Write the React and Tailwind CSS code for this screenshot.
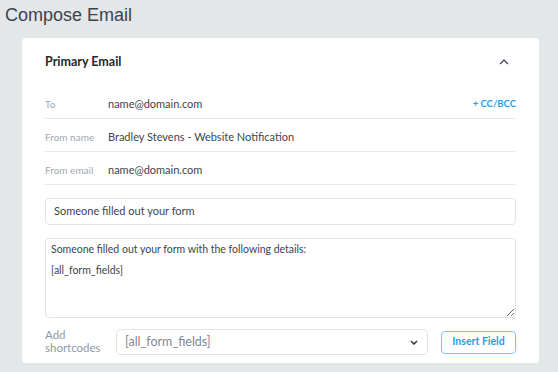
import React from 'react';

function Row({ label, value, extra }) {
  return (
    <div className="flex items-center h-[33px] pt-[5px] border-b border-[#e6e8ea]">
      <span className="w-[63px] text-[10px] text-[#a0a7b0]">{label}</span>
      <span className="flex-1 text-[11px] text-[#3d4450]">{value}</span>
      {extra}
    </div>
  );
}

export default function App() {
  return (
    <div className="w-[558px] h-[372px] bg-[#e4e7e8] overflow-hidden font-['Lato',sans-serif]">
      {/* Page title */}
      <h1 className="pl-[5px] pt-[3px] h-[38px] text-[18px] leading-[24px] text-[#3b4350] font-['Liberation_Sans',sans-serif]">Compose Email</h1>

      {/* Card */}
      <div className="ml-[22px] w-[517px] h-[325px] bg-white rounded-[4px] px-[23px] pt-[15px]">
        <div className="flex items-center justify-between h-[18px]">
          <span className="text-[12.5px] font-bold text-[#23282d]">Primary Email</span>
          <svg width="10" height="6" viewBox="0 0 10 6" className="mr-[7px]">
            <path d="M1 5 L5 1 L9 5" fill="none" stroke="#4b5260" strokeWidth="1.4" />
          </svg>
        </div>

        <div className="mt-[15px]">
          <Row
            label="To"
            value="name@domain.com"
            extra={<span className="text-[9.5px] font-bold text-[#1ea1e6]">+ CC/BCC</span>}
          />
          <Row label="From name" value="Bradley Stevens - Website Notification" />
          <Row label="From email" value="name@domain.com" />
        </div>

        <div className="mt-[13px] h-[27px] border border-[#e2e5e8] rounded-[4px] flex items-center px-[8px] text-[11px] text-[#3d4450]">
          Someone filled out your form
        </div>

        <textarea
          className="mt-[13px] block w-full h-[80px] border border-[#e2e5e8] rounded-[4px] px-[5px] py-0 text-[10.5px] leading-[21px] text-[#3d4450] resize-y outline-none"
          defaultValue={'Someone filled out your form with the following details:\n[all_form_fields]'}
        />

        <div className="mt-[11px] flex items-center">
          <div className="w-[71px] -mt-[3px] flex flex-col text-[11.5px] leading-[13px] text-[#8e99a8]">
            <span>Add</span>
            <span>shortcodes</span>
          </div>
          <div className="w-[312px] h-[26px] border border-[#e2e5e8] rounded-[4px] flex items-center justify-between pl-[8px] pr-[9px]">
            <span className="text-[12.5px] text-[#7f8894]">[all_form_fields]</span>
            <svg width="8" height="5" viewBox="0 0 8 5">
              <path d="M1 1 L4 4 L7 1" fill="none" stroke="#2d333c" strokeWidth="1.5" />
            </svg>
          </div>
          <button className="ml-[13px] w-[75px] h-[23px] border border-[#7cc6ee] rounded-[4px] text-[10.5px] font-bold text-[#1ea1e6]">
            Insert Field
          </button>
        </div>
      </div>
    </div>
  );
}
